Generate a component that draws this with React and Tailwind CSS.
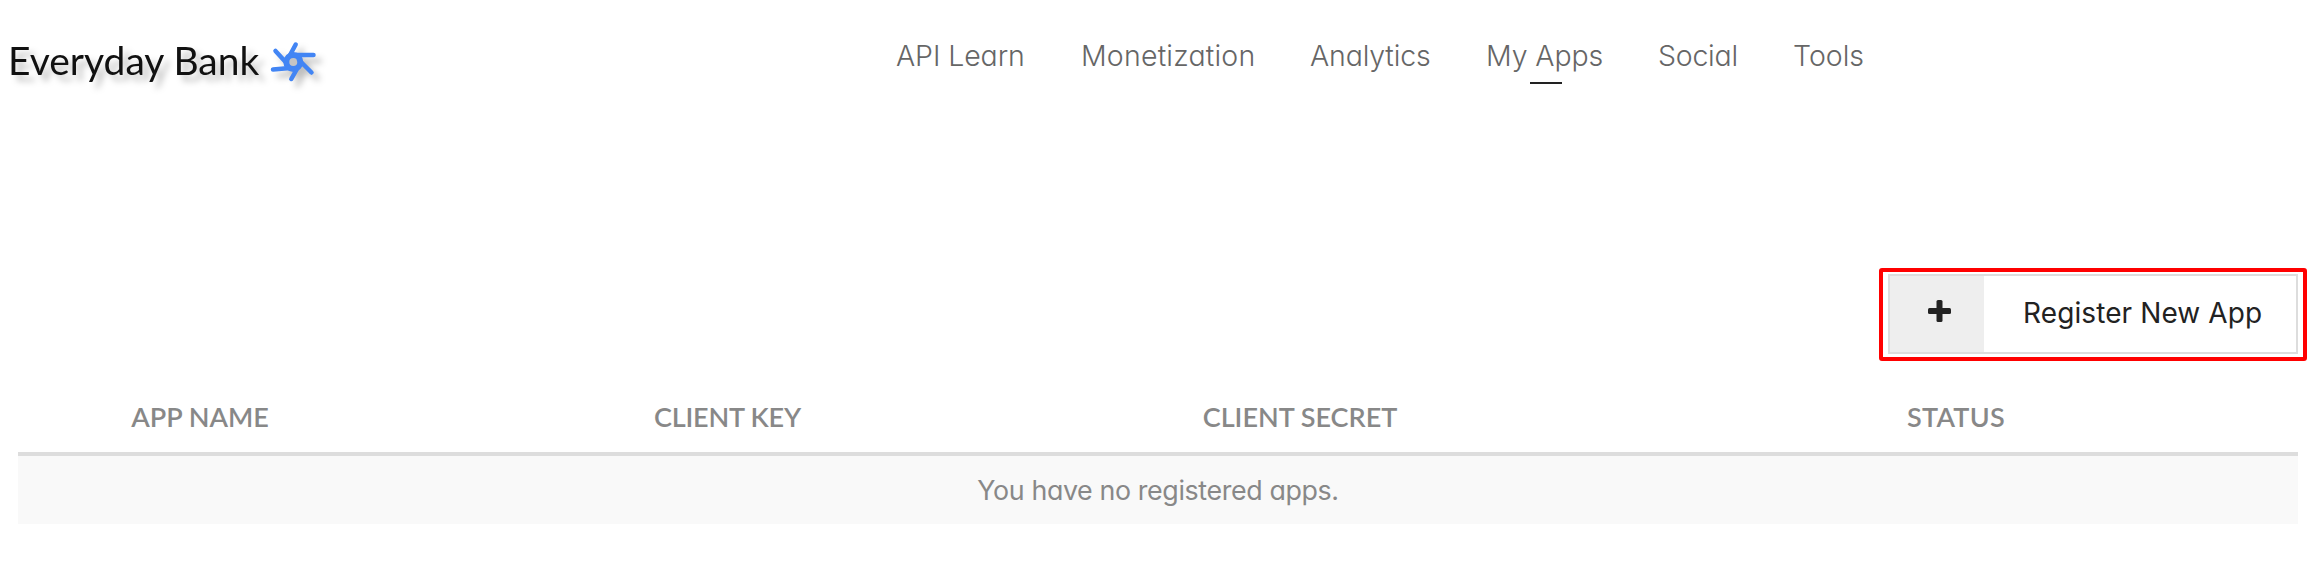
import React from 'react';

const NAV = [
  { label: 'API Learn', cls: 'w-[185px] tracking-[-0.1px]' },
  { label: 'Monetization', cls: 'w-[229px] tracking-[0.2px]' },
  { label: 'Analytics', cls: 'w-[176px] tracking-[-0.15px]' },
  { label: 'My Apps', cls: 'w-[172px] tracking-[-0.1px]', active: true },
  { label: 'Social', cls: 'w-[135px] tracking-[-0.25px]' },
  { label: 'Tools', cls: 'w-[90px]' },
];

function Logo() {
  return (
    <div className="flex h-[60px] w-[320px] items-center pl-[8px] drop-shadow-[6px_6px_3px_rgba(0,0,0,0.25)]">
      <span className="w-[262px] pb-[3px] font-['Lato',sans-serif] text-[39px] leading-[57px] whitespace-nowrap text-[#111]">
        Everyday Bank
      </span>
      <svg width="48" height="42" viewBox="0 0 48 42" fill="none" stroke="#4285f4" strokeLinecap="round">
        <circle cx="23.3" cy="21" r="7" strokeWidth="6" fill="#c4c4c4" />
        <path
          strokeWidth="4.500"
          d="M25.700 3.500 L19.500 15 M43.500 14 L23.500 14 M41.500 31.500 L29 19 M21.300 38 L27.500 27 M3 28.500 L20 27 M5.500 10 L16.500 22"
        />
      </svg>
    </div>
  );
}

export default function App() {
  return (
    <div className="h-[564px] w-[2322px] overflow-hidden bg-white font-['Inter','Open_Sans',sans-serif] [font-feature-settings:'cv11']">
      <header className="flex h-[268px] pt-[32px]">
        <Logo />
        <nav className="ml-[576px] flex h-[52px] text-[28.5px] leading-[48px] font-[350] whitespace-nowrap text-[#666]">
          {NAV.map(({ label, cls, active }) => (
            <a key={label} className={cls}>
              <span className="relative inline-block">
                {label}
                {active && <span className="absolute top-[50px] left-[44px] h-[2px] w-[32px] bg-[#222]" />}
              </span>
            </a>
          ))}
        </nav>
      </header>

      <div className="flex justify-end pr-[15px]">
        <div className="h-[93px] w-[428px] rounded-[3px] border-4 border-[#f00] pt-[2px] pl-[5px]">
          <button className="flex h-[80px] w-[410px] border-2 border-[#ddd] bg-white text-[#222]">
            <span className="flex h-full w-[94px] items-center justify-center bg-[#eee]">
              <svg width="23" height="22" viewBox="0 0 23 22" fill="#222" className="mb-[6px] ml-[4px]">
                <rect x="0" y="8" width="23" height="6" rx="1.500" />
                <rect x="8.500" y="0" width="6" height="22" rx="1.500" />
              </svg>
            </span>
            <span className="flex-1 pl-[39px] text-left text-[28px] leading-[74px] tracking-[0.1px] whitespace-nowrap">
              Register New App
            </span>
          </button>
        </div>
      </div>

      <table className="mt-[27px] ml-[18px] w-[2280px] table-fixed border-collapse">
        <colgroup>
          <col className="w-[451px]" />
          <col className="w-[517px]" />
          <col className="w-[628px]" />
          <col className="w-[684px]" />
        </colgroup>
        <thead>
          <tr className="h-[64px] font-['Lato',sans-serif] text-[27px] leading-[57px] text-[#888]">
            <th className="p-0 pr-[87px] align-top font-semibold">APP NAME</th>
            <th className="p-0 align-top font-semibold tracking-[-0.2px]">CLIENT KEY</th>
            <th className="p-0 align-top font-semibold">CLIENT SECRET</th>
            <th className="p-0 align-top font-semibold tracking-[0.3px]">STATUS</th>
          </tr>
        </thead>
        <tbody>
          <tr>
            <td colSpan={4} className="p-0">
              <div className="h-[72px] border-t-4 border-[#ddd] bg-[#f9f9f9] text-center text-[26.8px] leading-[69px] font-[370] tracking-[-0.37px] text-[#888]">
                You have no registered apps.
              </div>
            </td>
          </tr>
        </tbody>
      </table>
    </div>
  );
}
